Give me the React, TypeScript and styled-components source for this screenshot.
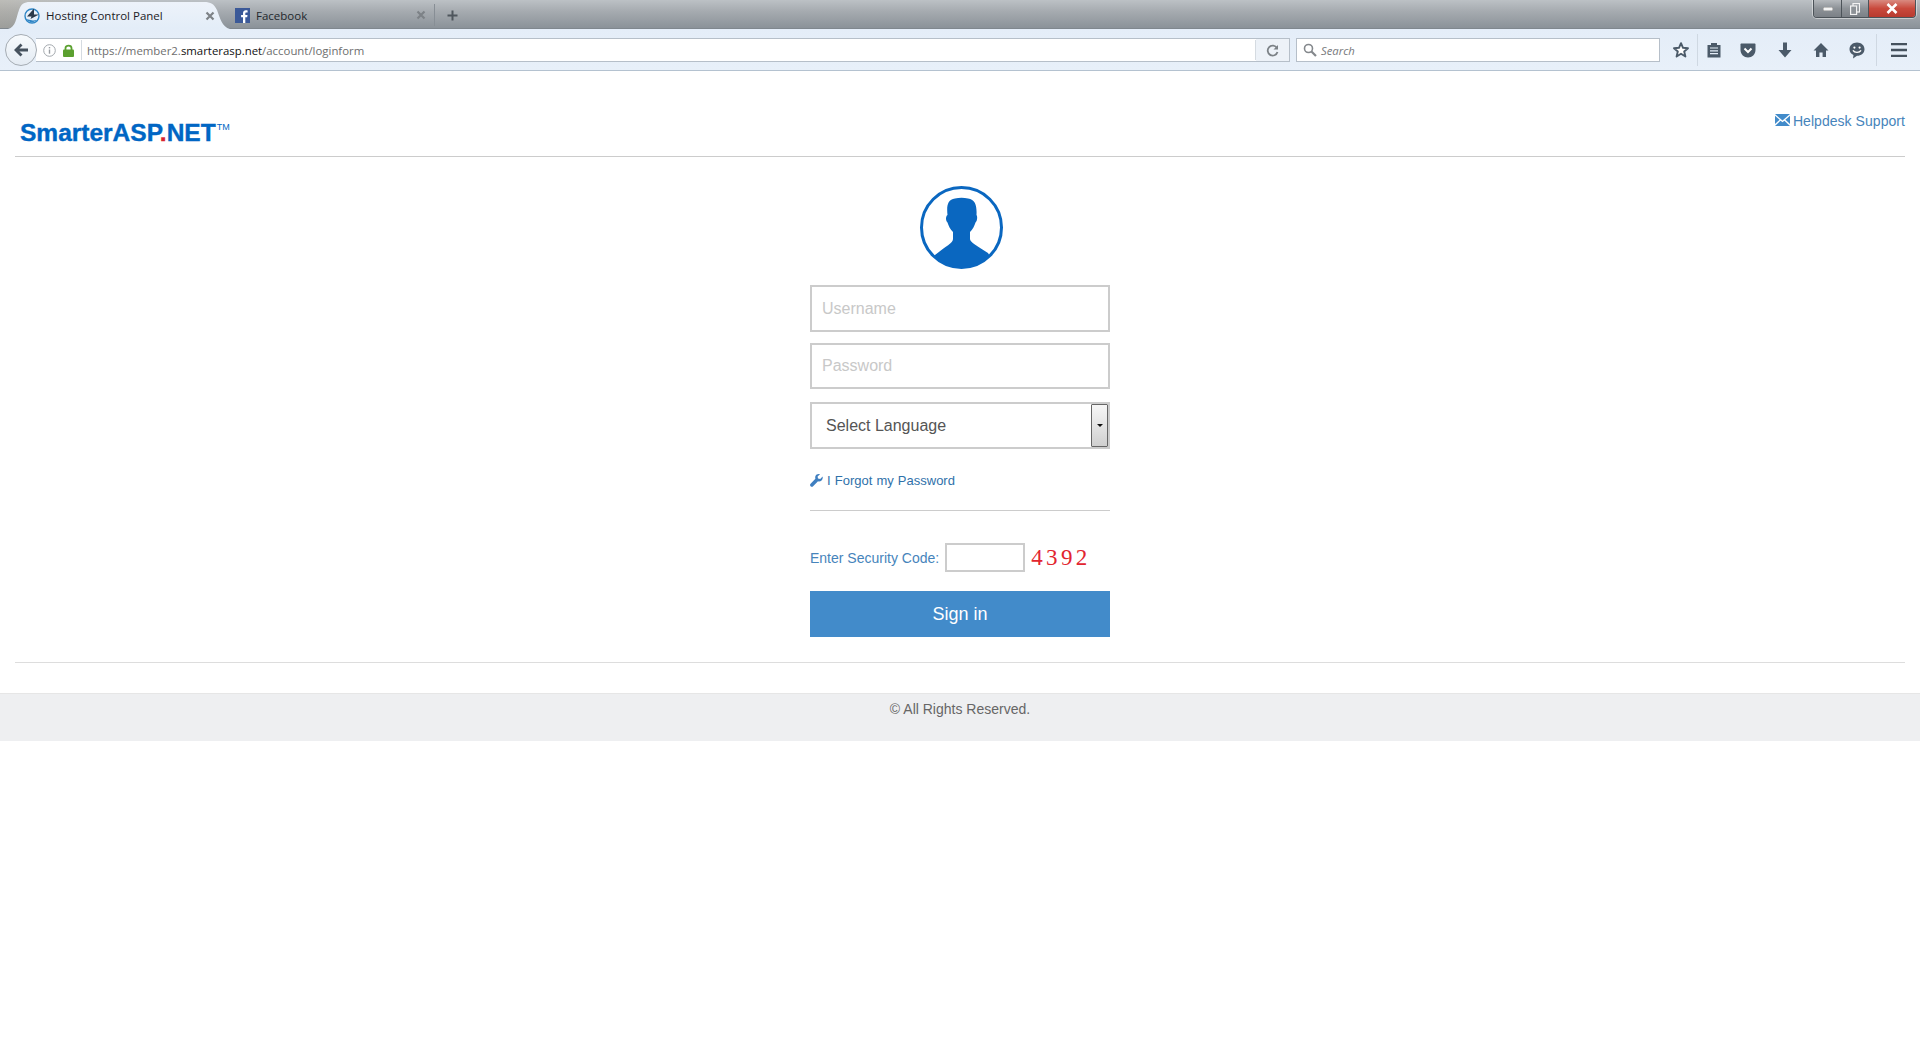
import React from "react";
import styled, { createGlobalStyle } from "styled-components";

const Global = createGlobalStyle`
  html, body { margin: 0; padding: 0; background: #fff; }
  body { font-family: "Liberation Sans", Arial, sans-serif; }
  * { box-sizing: border-box; }
`;

const Chrome = styled.div`
  width: 100%;
  font-family: "Open Sans", "Noto Sans", sans-serif;
`;
const TabStrip = styled.div`
  height: 29px;
  display: flex;
  align-items: stretch;
  padding-left: 8px;
  background:
    linear-gradient(90deg, rgba(190, 180, 160, 0.35) 0%, rgba(190, 180, 160, 0) 6%),
    linear-gradient(180deg, #bcc1c5 0%, #a6abb0 40%, #8b9299 100%);
  border-bottom: 1px solid #7f878e;
`;
const ActiveTab = styled.div`
  width: 222px;
  height: 29px;
  flex: none;
  display: flex;
  align-items: center;
  padding: 2px 15px 0 16px;
  background: linear-gradient(180deg, #eef3fa, #e3edf8);
  clip-path: path("M0 29 C8 27 8 18 11 10 C13 4 16 2 22 2 L196 2 C203 2 206 4 209 10 C212 18 214 27 222 29 Z");
  color: #1c2126;
  font-size: 11.5px;
`;
const PlainTab = styled.div`
  width: 205px;
  flex: none;
  display: flex;
  align-items: center;
  padding: 0 8px 0 5px;
  color: #23282d;
  font-size: 11.5px;
  border-right: 1px solid #878e95;
  margin: 4px 0 2px;
`;
const TabTitle = styled.span`
  flex: 1;
  margin-left: 6px;
  white-space: nowrap;
`;
const NewTab = styled.div`
  width: 34px;
  display: flex;
  align-items: center;
  justify-content: center;
  padding-top: 2px;
`;
const Spacer = styled.div`
  flex: 1;
`;
const WindowControls = styled.div`
  display: flex;
  align-self: flex-start;
  height: 18px;
  margin-right: 4px;
  border: 1px solid #4c5359;
  border-top: none;
  border-radius: 0 0 4px 4px;
  overflow: hidden;
  box-shadow: 0 0 0 1px rgba(255, 255, 255, 0.45);
`;
const WinButton = styled.div<{ $w: number; $close?: boolean }>`
  width: ${(p) => p.$w}px;
  display: flex;
  align-items: center;
  justify-content: center;
  background: ${(p) =>
    p.$close
      ? "linear-gradient(180deg, #d98a80 0%, #c9493c 50%, #b83a2f 100%)"
      : "linear-gradient(180deg, #b6babe 0%, #8d9297 50%, #7b8086 100%)"};
  border-right: ${(p) => (p.$close ? "none" : "1px solid #4c5359")};
`;
const NavBar = styled.div`
  height: 42px;
  display: flex;
  align-items: center;
  padding: 1px 0 0 5px;
  background: linear-gradient(180deg, #e4edf8, #e8f0f9);
  border-bottom: 1px solid #b4c2d0;
`;
const BackButton = styled.div`
  width: 32px;
  height: 32px;
  flex: none;
  border-radius: 50%;
  border: 1px solid #a5acb3;
  background: linear-gradient(180deg, #f7fafd, #e4ebf3);
  display: flex;
  align-items: center;
  justify-content: center;
  position: relative;
  z-index: 1;
`;
const UrlBar = styled.div`
  width: 1254px;
  height: 24px;
  margin-left: -1px;
  flex: none;
  display: flex;
  align-items: center;
  background: #fff;
  border: 1px solid #b6bfc9;
  border-left: none;
  font-size: 11.4px;
`;
const SiteIcons = styled.div`
  width: 45px;
  height: 100%;
  flex: none;
  display: flex;
  align-items: center;
  gap: 7px;
  padding-left: 7px;
  background: #fff;
`;
const UrlDivider = styled.div`
  width: 1px;
  height: 20px;
  background: #d5dbe1;
  flex: none;
`;
const UrlText = styled.div`
  flex: 1;
  padding-left: 5px;
  color: #6e6e6e;
  white-space: nowrap;
`;
const UrlHost = styled.span`
  color: #111;
`;
const Reload = styled.div`
  width: 33px;
  height: 100%;
  flex: none;
  display: flex;
  align-items: center;
  justify-content: center;
  background: #edf2f8;
`;
const SearchBar = styled.div`
  width: 364px;
  height: 24px;
  margin-left: 6px;
  flex: none;
  display: flex;
  align-items: center;
  gap: 4px;
  padding-left: 6px;
  background: #fff;
  border: 1px solid #b6bfc9;
  color: #77797c;
  font-size: 11.3px;
  font-style: italic;
`;
const Tools = styled.div`
  display: flex;
  align-items: center;
  height: 32px;
  margin-left: 5px;
`;
const ToolButton = styled.div<{ $w: number; $divider?: boolean }>`
  width: ${(p) => p.$w}px;
  height: 100%;
  flex: none;
  display: flex;
  align-items: center;
  justify-content: center;
  border-right: ${(p) => (p.$divider ? "1px solid #cfd8e2" : "none")};
`;
const ToolGap = styled.div`
  width: 3px;
  height: 100%;
  border-right: 1px solid #cfd8e2;
`;

const Page = styled.div`
  padding: 0 15px;
`;
const Header = styled.header`
  height: 86px;
  display: flex;
  justify-content: space-between;
  align-items: flex-start;
  border-bottom: 1px solid #ccc;
`;
const Logo = styled.div`
  margin: 47px 0 0 5px;
  font-size: 24.5px;
  line-height: 30px;
  font-weight: 700;
  color: #0066c4;
  -webkit-text-stroke: 0.4px #0066c4;
  white-space: nowrap;
`;
const LogoDot = styled.span`
  color: #d9232e;
  -webkit-text-stroke: 0.4px #d9232e;
`;
const Trademark = styled.sup`
  font-size: 9px;
  font-weight: 400;
  vertical-align: 11px;
  line-height: 0;
  margin-left: 1px;
  -webkit-text-stroke: 0;
`;
const HelpLink = styled.a`
  margin-top: 40px;
  display: flex;
  align-items: center;
  gap: 3px;
  font-size: 14px;
  line-height: 20px;
  letter-spacing: 0.05px;
  color: #4684bb;
  white-space: nowrap;
`;
const LoginColumn = styled.main`
  width: 300px;
  margin: 0 auto;
  padding: 29px 0 25px;
  display: flex;
  flex-direction: column;
`;
const Avatar = styled.div`
  align-self: center;
  margin: 0 0 16px 3px;
  height: 83px;
`;
const TextField = styled.input<{ $mb: number }>`
  width: 100%;
  height: ${(p) => (p.$mb === 11 ? 47 : 46)}px;
  margin-bottom: ${(p) => p.$mb}px;
  padding: 0 10px;
  border: 2px solid #ccc;
  outline: none;
  background: #fff;
  font: 16px "Liberation Sans", Arial, sans-serif;
  &::placeholder { color: #c8c8c8; opacity: 1; }
`;
const SelectBox = styled.div`
  width: 100%;
  height: 47px;
  display: flex;
  align-items: center;
  padding: 0 0 0 14px;
  border: 2px solid #ccc;
  font-size: 16px;
  color: #555;
`;
const SelectLabel = styled.span`
  flex: 1;
`;
const SelectArrow = styled.div`
  width: 17px;
  height: 43px;
  display: flex;
  align-items: center;
  justify-content: center;
  border: 1px solid #666;
  border-radius: 1px;
  background: linear-gradient(180deg, #f6f6f6 0%, #e4e4e4 50%, #cfcfcf 100%);
`;
const ArrowGlyph = styled.div`
  width: 0;
  height: 0;
  border-left: 3.5px solid transparent;
  border-right: 3.5px solid transparent;
  border-top: 3.5px solid #111;
`;
const ForgotLink = styled.a`
  margin-top: 21px;
  height: 20px;
  display: flex;
  align-items: center;
  gap: 4px;
  font-size: 13px;
  word-spacing: 0.5px;
  color: #2f71aa;
`;
const Rule = styled.hr`
  width: 100%;
  height: 1px;
  margin: 20px 0 32px;
  border: none;
  background: #ccc;
`;
const SecurityRow = styled.div`
  height: 29px;
  display: flex;
  align-items: center;
  margin-bottom: 19px;
`;
const SecurityLabel = styled.label`
  font-size: 14px;
  color: #4684bb;
  white-space: nowrap;
`;
const CodeInput = styled.input`
  width: 80px;
  height: 29px;
  margin-left: 6px;
  border: 2px solid #ccc;
  outline: none;
  background: #fff;
`;
const Captcha = styled.span`
  margin-left: 6px;
  font-family: "Liberation Serif", "Times New Roman", serif;
  font-size: 23px;
  letter-spacing: 3.4px;
  color: #e2252f;
`;
const SignIn = styled.button`
  width: 100%;
  height: 46px;
  border: none;
  background: #428bca;
  color: #fff;
  font: 18px "Liberation Sans", Arial, sans-serif;
`;
const BottomRule = styled.hr`
  margin: 0;
  height: 1px;
  border: none;
  background: #ddd;
`;
const Footer = styled.footer`
  margin-top: 30px;
  height: 48px;
  padding-top: 5px;
  background: #eeeff1;
  border-top: 1px solid #e6e6e6;
  text-align: center;
  font-size: 14px;
  line-height: 20px;
  color: #666;
`;

const Favicon = () => (
  <svg width="16" height="16" viewBox="0 0 16 16">
    <circle cx="8" cy="8" r="7" fill="none" stroke="#2f86c6" strokeWidth="1.4" />
    <path d="M10 0.5 L3 8.5 L7.5 8.5 L6.5 11 L15 6.5 L10 6.5 Z" fill="#2c3a4a" />
    <path d="M2 11 C5 15 10 15 13 12 L9 12.5 Z" fill="#2f86c6" />
  </svg>
);
const FbIcon = () => (
  <svg width="15" height="15" viewBox="0 0 15 15">
    <rect width="15" height="15" fill="#3b5998" />
    <path d="M10.3 15 V9.3 H12.2 L12.5 7 H10.3 V5.6 C10.3 4.9 10.5 4.5 11.4 4.5 H12.6 V2.4 C12.3 2.4 11.7 2.3 10.9 2.3 C9.2 2.3 8 3.4 8 5.2 V7 H6.1 V9.3 H8 V15 Z" fill="#fff" />
  </svg>
);
const CloseX = ({ c = "#7d8287" }: { c?: string }) => (
  <svg width="10" height="10" viewBox="0 0 10 10">
    <path d="M1.5 1.5 L8.5 8.5 M8.5 1.5 L1.5 8.5" stroke={c} strokeWidth="2.2" />
  </svg>
);

const AvatarIcon = () => (
  <svg width="83" height="83" viewBox="0 0 83 83">
    <defs>
      <clipPath id="avatarClip">
        <circle cx="41.5" cy="41.5" r="39.5" />
      </clipPath>
    </defs>
    <g clipPath="url(#avatarClip)" fill="#0a67c0">
      <path d="M27.5 29 C26.5 20 27.5 13.5 35 12.5 C39 11.5 44 11.5 48 12.5 C55.5 13.5 57 20 56.5 29 C57.5 30 57.5 35 55.5 36.5 C54.5 40 52.5 43.5 50 46 L50 53 C50 56 57 60 68 67 L78 83 L5 83 L15 69 C26 60 33 57 33 53 L33 46 C30.5 43.5 28.5 40 27.5 36.5 C25.5 35 25.5 30 27.5 29 Z" />
    </g>
    <circle cx="41.5" cy="41.5" r="40" fill="none" stroke="#0a67c0" strokeWidth="3" />
  </svg>
);
const Wrench = () => (
  <svg width="13" height="13" viewBox="0 0 13 13">
    <path d="M12.6 2.6 L10.2 5 L8 4.6 L7.6 2.5 L10 0.3 C8 -0.3 6 0.5 5.4 2.3 C5.1 3.2 5.2 4 5.4 4.8 L0.6 9.7 C-0.1 10.4 -0.1 11.5 0.6 12.2 C1.3 12.9 2.4 12.9 3.1 12.2 L8 7.3 C10.4 8.1 13.4 6 12.6 2.6 Z" fill="#3f7fc0" />
  </svg>
);
const Envelope = () => (
  <svg width="15" height="12" viewBox="0 0 14 11" style={{ marginTop: -2 }}>
    <path d="M0 0 H14 L7 6 Z M0 1.6 L4.3 5.3 L0 9.2 Z M14 1.6 L9.7 5.3 L14 9.2 Z M0 11 L5.2 6.2 L7 7.7 L8.8 6.2 L14 11 Z" fill="#428bca" />
  </svg>
);

const ic = "#4b5a69";

export default function App() {
  return (
    <>
      <Global />
      <Chrome>
        <TabStrip>
          <ActiveTab>
            <Favicon />
            <TabTitle>Hosting Control Panel</TabTitle>
            <CloseX />
          </ActiveTab>
          <PlainTab>
            <FbIcon />
            <TabTitle>Facebook</TabTitle>
            <CloseX />
          </PlainTab>
          <NewTab>
            <svg width="11" height="11" viewBox="0 0 11 11">
              <path d="M5.5 0.5 V10.5 M0.5 5.5 H10.5" stroke="#4f565d" strokeWidth="2" />
            </svg>
          </NewTab>
          <Spacer />
          <WindowControls>
            <WinButton $w={28}>
              <svg width="10" height="4"><rect width="10" height="4" fill="#f4f4f4" stroke="#444" strokeWidth="0.6" /></svg>
            </WinButton>
            <WinButton $w={27}>
              <svg width="10" height="12" viewBox="0 0 10 12">
                <rect x="3" y="0.5" width="6.5" height="8.5" fill="none" stroke="#f2f2f2" strokeWidth="1.2" />
                <rect x="0.6" y="3" width="6" height="8.5" fill="#8d9297" stroke="#f2f2f2" strokeWidth="1.2" />
              </svg>
            </WinButton>
            <WinButton $w={46} $close>
              <svg width="12" height="11" viewBox="0 0 12 11">
                <path d="M1.5 1 L10.5 10 M10.5 1 L1.5 10" stroke="#fff" strokeWidth="2.6" />
              </svg>
            </WinButton>
          </WindowControls>
        </TabStrip>
        <NavBar>
          <BackButton>
            <svg width="16" height="14" viewBox="0 0 16 14">
              <path d="M7.5 0.5 L1 7 L7.5 13.5 L9.5 11.6 L6.4 8.6 H15 V5.4 H6.4 L9.5 2.4 Z" fill="#46525e" />
            </svg>
          </BackButton>
          <UrlBar>
            <SiteIcons>
              <svg width="13" height="13" viewBox="0 0 13 13">
                <circle cx="6.5" cy="6.5" r="5.8" fill="#fff" stroke="#a3a8ad" />
                <rect x="5.8" y="5.5" width="1.4" height="4.2" fill="#9a9ea3" />
                <rect x="5.8" y="3" width="1.4" height="1.4" fill="#9a9ea3" />
              </svg>
              <svg width="11" height="13" viewBox="0 0 11 13">
                <path d="M2.5 6 V4 C2.5 0.7 8.5 0.7 8.5 4 V6" fill="none" stroke="#5ba02f" strokeWidth="1.8" />
                <rect y="5.5" width="11" height="7.5" rx="1" fill="#5ba02f" />
              </svg>
            </SiteIcons>
            <UrlDivider />
            <UrlText>
              https://member2.<UrlHost>smarterasp.net</UrlHost>/account/loginform
            </UrlText>
            <UrlDivider />
            <Reload>
              <svg width="13" height="13" viewBox="0 0 13 13">
                <path d="M11 4 A5 5 0 1 0 11.5 8" fill="none" stroke="#7c8287" strokeWidth="1.8" />
                <path d="M12 1 V5.5 H7.5 Z" fill="#7c8287" />
              </svg>
            </Reload>
          </UrlBar>
          <SearchBar>
            <svg width="14" height="14" viewBox="0 0 14 14">
              <circle cx="5.5" cy="5.5" r="4" fill="none" stroke="#84888c" strokeWidth="1.6" />
              <path d="M8.5 8.5 L13 13" stroke="#84888c" strokeWidth="2.2" />
            </svg>
            Search
          </SearchBar>
          <Tools>
            <ToolButton $w={33} $divider>
              <svg width="16" height="16" viewBox="0 0 16 16">
                <path d="M8 1.2 L10 5.8 L15 6.2 L11.2 9.5 L12.4 14.5 L8 11.8 L3.6 14.5 L4.8 9.5 L1 6.2 L6 5.8 Z" fill="#fff" stroke={ic} strokeWidth="1.9" strokeLinejoin="round" />
              </svg>
            </ToolButton>
            <ToolButton $w={31}>
              <svg width="14" height="16" viewBox="0 0 14 16">
                <path d="M0.5 3 H4 V1 H10 V3 H13.5 V15.5 H0.5 Z" fill={ic} />
                <path d="M3 6 H11 M3 8.8 H11 M3 11.6 H11" stroke="#e4edf8" strokeWidth="1.2" />
              </svg>
            </ToolButton>
            <ToolButton $w={38}>
              <svg width="16" height="15" viewBox="0 0 16 15">
                <path d="M0.5 1.5 C0.5 0.8 1 0.5 1.5 0.5 H14.5 C15 0.5 15.5 0.8 15.5 1.5 V7 C15.5 11.5 12 14.5 8 14.5 C4 14.5 0.5 11.5 0.5 7 Z" fill={ic} />
                <path d="M4.5 5.5 L8 9 L11.5 5.5" fill="none" stroke="#fff" strokeWidth="2" />
              </svg>
            </ToolButton>
            <ToolButton $w={35}>
              <svg width="14" height="16" viewBox="0 0 14 16">
                <path d="M5 0.5 H9 V8 H13.5 L7 15.5 L0.5 8 H5 Z" fill={ic} />
              </svg>
            </ToolButton>
            <ToolButton $w={37}>
              <svg width="16" height="16" viewBox="0 0 16 16">
                <path d="M8 1 L15.5 8.5 H13 V15 H9.6 V10.5 H6.4 V15 H3 V8.5 H0.5 Z" fill={ic} />
              </svg>
            </ToolButton>
            <ToolButton $w={35}>
              <svg width="16" height="17" viewBox="0 0 16 17">
                <path d="M8 0.5 C12.2 0.5 15.5 3.3 15.5 7.2 C15.5 11 12.2 13.8 8 13.8 L4 16.5 L4.5 13 C2 11.8 0.5 9.7 0.5 7.2 C0.5 3.3 3.8 0.5 8 0.5 Z" fill={ic} />
                <circle cx="5.4" cy="5.6" r="1.1" fill="#fff" />
                <circle cx="10.6" cy="5.6" r="1.1" fill="#fff" />
                <path d="M4 8.3 C5.5 11 10.5 11 12 8.3" fill="none" stroke="#fff" strokeWidth="1.4" />
              </svg>
            </ToolButton>
            <ToolGap />
            <ToolButton $w={44}>
              <svg width="16" height="14" viewBox="0 0 16 14">
                <path d="M0 1 H16 M0 7 H16 M0 13 H16" stroke="#46525e" strokeWidth="2.4" />
              </svg>
            </ToolButton>
          </Tools>
        </NavBar>
      </Chrome>
      <Page>
        <Header>
          <Logo>
            SmarterASP<LogoDot>.</LogoDot>NET<Trademark>TM</Trademark>
          </Logo>
          <HelpLink>
            <Envelope />
            Helpdesk Support
          </HelpLink>
        </Header>
        <LoginColumn>
          <Avatar>
            <AvatarIcon />
          </Avatar>
          <TextField $mb={11} placeholder="Username" />
          <TextField $mb={13} placeholder="Password" />
          <SelectBox>
            <SelectLabel>Select Language</SelectLabel>
            <SelectArrow>
              <ArrowGlyph />
            </SelectArrow>
          </SelectBox>
          <ForgotLink>
            <Wrench />I Forgot my Password
          </ForgotLink>
          <Rule />
          <SecurityRow>
            <SecurityLabel>Enter Security Code:</SecurityLabel>
            <CodeInput />
            <Captcha>4392</Captcha>
          </SecurityRow>
          <SignIn>Sign in</SignIn>
        </LoginColumn>
        <BottomRule />
      </Page>
      <Footer>© All Rights Reserved.</Footer>
    </>
  );
}
